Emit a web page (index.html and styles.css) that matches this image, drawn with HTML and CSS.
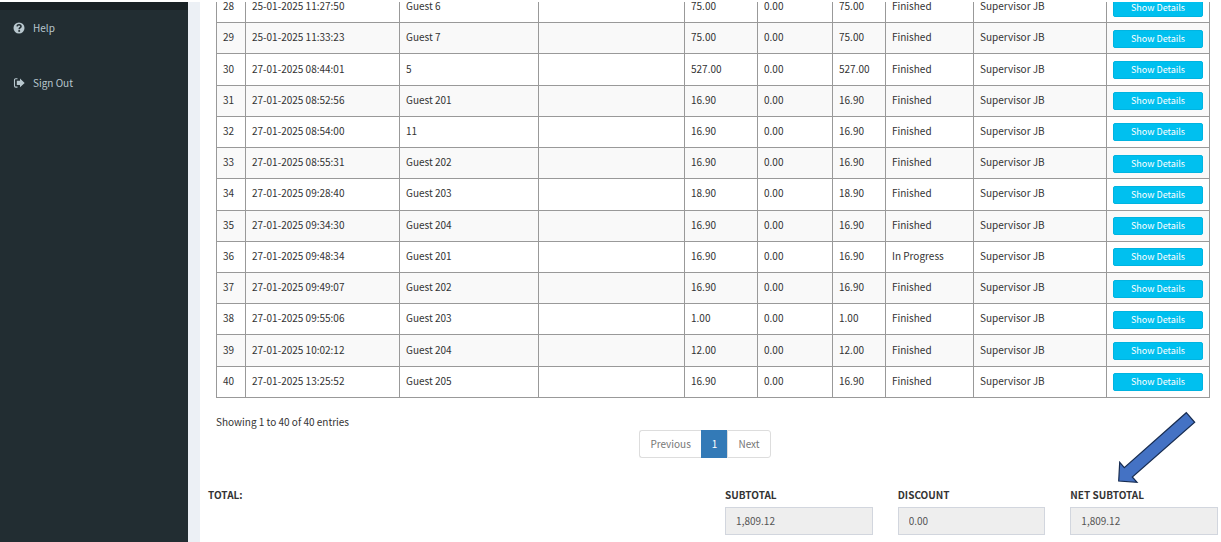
FILE: index.html
```
<!DOCTYPE html>
<html lang="en">
<head>
    <meta charset="UTF-8">
    <meta name="viewport" content="width=device-width, initial-scale=1.0">
    <title>Sales Report</title>
    <link rel="stylesheet" href="styles.css">
</head>
<body>
    <div class="wrapper">
        <aside class="sidebar">
            <div class="sidebar-header"></div>
            <nav class="sidebar-menu">
                <a href="#">
                    <svg class="icon" viewBox="0 0 14 14"><circle cx="7" cy="7" r="5.500" fill="#b8c7ce"/><path d="M5 5.400C5.200 4.300 5.900 3.700 7 3.700c1.200 0 2 .7 2 1.700C9 6.700 7.200 6.700 7.200 8.200" fill="none" stroke="#222d32" stroke-width="1.600"/><path d="M6.300 9.100h1.800v1.700H6.300z" fill="#222d32"/></svg>
                    <span>Help</span>
                </a>
                <a href="#">
                    <svg class="icon" viewBox="0 0 14 14"><path d="M5.500 2.700H3.700C3 2.700 2.500 3.300 2.500 4v5.800c0 .8.500 1.300 1.200 1.300h1.800" fill="none" stroke="#b8c7ce" stroke-width="1.100"/><path d="M8 2.500 12.700 6.900 8 11.300V9H4.800V4.800H8z" fill="#b8c7ce"/></svg>
                    <span>Sign Out</span>
                </a>
            </nav>
        </aside>

        <main class="content">
            <div class="table-box">
                <table class="report">
                    <colgroup>
                        <col class="col-no">
                        <col class="col-date">
                        <col class="col-guest">
                        <col class="col-note">
                        <col class="col-amount">
                        <col class="col-discount">
                        <col class="col-net">
                        <col class="col-status">
                        <col class="col-user">
                        <col class="col-action">
                    </colgroup>
                    <tbody>
                        <tr><td>28</td><td>25-01-2025 11:27:50</td><td>Guest 6</td><td></td><td>75.00</td><td>0.00</td><td>75.00</td><td>Finished</td><td>Supervisor JB</td><td><button type="button" class="btn">Show Details</button></td></tr>
                        <tr><td>29</td><td>25-01-2025 11:33:23</td><td>Guest 7</td><td></td><td>75.00</td><td>0.00</td><td>75.00</td><td>Finished</td><td>Supervisor JB</td><td><button type="button" class="btn">Show Details</button></td></tr>
                        <tr><td>30</td><td>27-01-2025 08:44:01</td><td>5</td><td></td><td>527.00</td><td>0.00</td><td>527.00</td><td>Finished</td><td>Supervisor JB</td><td><button type="button" class="btn">Show Details</button></td></tr>
                        <tr><td>31</td><td>27-01-2025 08:52:56</td><td>Guest 201</td><td></td><td>16.90</td><td>0.00</td><td>16.90</td><td>Finished</td><td>Supervisor JB</td><td><button type="button" class="btn">Show Details</button></td></tr>
                        <tr><td>32</td><td>27-01-2025 08:54:00</td><td>11</td><td></td><td>16.90</td><td>0.00</td><td>16.90</td><td>Finished</td><td>Supervisor JB</td><td><button type="button" class="btn">Show Details</button></td></tr>
                        <tr><td>33</td><td>27-01-2025 08:55:31</td><td>Guest 202</td><td></td><td>16.90</td><td>0.00</td><td>16.90</td><td>Finished</td><td>Supervisor JB</td><td><button type="button" class="btn">Show Details</button></td></tr>
                        <tr><td>34</td><td>27-01-2025 09:28:40</td><td>Guest 203</td><td></td><td>18.90</td><td>0.00</td><td>18.90</td><td>Finished</td><td>Supervisor JB</td><td><button type="button" class="btn">Show Details</button></td></tr>
                        <tr><td>35</td><td>27-01-2025 09:34:30</td><td>Guest 204</td><td></td><td>16.90</td><td>0.00</td><td>16.90</td><td>Finished</td><td>Supervisor JB</td><td><button type="button" class="btn">Show Details</button></td></tr>
                        <tr><td>36</td><td>27-01-2025 09:48:34</td><td>Guest 201</td><td></td><td>16.90</td><td>0.00</td><td>16.90</td><td>In Progress</td><td>Supervisor JB</td><td><button type="button" class="btn">Show Details</button></td></tr>
                        <tr><td>37</td><td>27-01-2025 09:49:07</td><td>Guest 202</td><td></td><td>16.90</td><td>0.00</td><td>16.90</td><td>Finished</td><td>Supervisor JB</td><td><button type="button" class="btn">Show Details</button></td></tr>
                        <tr><td>38</td><td>27-01-2025 09:55:06</td><td>Guest 203</td><td></td><td>1.00</td><td>0.00</td><td>1.00</td><td>Finished</td><td>Supervisor JB</td><td><button type="button" class="btn">Show Details</button></td></tr>
                        <tr><td>39</td><td>27-01-2025 10:02:12</td><td>Guest 204</td><td></td><td>12.00</td><td>0.00</td><td>12.00</td><td>Finished</td><td>Supervisor JB</td><td><button type="button" class="btn">Show Details</button></td></tr>
                        <tr><td>40</td><td>27-01-2025 13:25:52</td><td>Guest 205</td><td></td><td>16.90</td><td>0.00</td><td>16.90</td><td>Finished</td><td>Supervisor JB</td><td><button type="button" class="btn">Show Details</button></td></tr>
                    </tbody>
                </table>
            </div>

            <div class="table-info">Showing 1 to 40 of 40 entries</div>
            <nav class="pagination">
                <a href="#">Previous</a>
                <a href="#" class="active">1</a>
                <a href="#">Next</a>
            </nav>

            <div class="totals">
                <div class="totals-title">TOTAL:</div>
                <div class="field">
                    <label for="subtotal">SUBTOTAL</label>
                    <input type="text" id="subtotal" value="1,809.12" readonly>
                </div>
                <div class="field">
                    <label for="discount">DISCOUNT</label>
                    <input type="text" id="discount" value="0.00" readonly>
                </div>
                <div class="field">
                    <label for="net">NET SUBTOTAL</label>
                    <input type="text" id="net" value="1,809.12" readonly>
                    <svg class="arrow" viewBox="0 0 80 74"><path d="M69.300 1.700 77.700 11.300 15.300 66 20 71.300 1.700 70 2.700 51.300 7.300 56.700z" fill="#4472c4" stroke="#172c51" stroke-width="1.200"/></svg>
                </div>
            </div>
        </main>
    </div>
</body>
</html>
```
FILE: styles.css
```
* {
    box-sizing: border-box;
}
body {
    margin: 0;
    background: #fff;
    color: #333;
    font-family: "Noto Sans CJK SC", "Open Sans", sans-serif;
    font-size: 10px;
    line-height: 16px;
}
.wrapper {
    display: flex;
    min-height: 100vh;
    padding-top: 2px;
}

/* sidebar */
.sidebar {
    flex: 0 0 188px;
    background: #222d32;
}
.sidebar-header {
    height: 8px;
    background: #1a2226;
}
.sidebar-menu {
    display: flex;
    flex-direction: column;
    gap: 20px;
}
.sidebar-menu a {
    display: flex;
    align-items: center;
    gap: 7px;
    height: 35px;
    padding-left: 12px;
    color: #b8c7ce;
    text-decoration: none;
}
.icon {
    width: 14px;
    height: 14px;
}

/* content */
.content {
    flex: 1;
    min-width: 0;
    border-left: 12px solid #ecf0f5;
}
.table-box {
    overflow: hidden;
    padding: 0 11px 0 16px;
}
.report {
    width: 100%;
    height: 407px;
    margin-top: -11px;
    table-layout: fixed;
    border-collapse: collapse;
}
.report td {
    padding: 0 6px 2px;
    border: 1px solid #999;
}
.report td:last-child {
    padding: 1px 6px 0;
}
.report tr:nth-child(even) {
    background: #f9f9f9;
}
.col-no { width: 29px; }
.col-date { width: 154px; }
.col-guest { width: 139px; }
.col-note { width: 146px; }
.col-amount { width: 73px; }
.col-discount { width: 75px; }
.col-net { width: 53px; }
.col-status { width: 88px; }
.col-user { width: 133px; }
.col-action { width: 103px; }
.btn {
    display: block;
    width: 100%;
    height: 18px;
    padding: 0;
    border: 1px solid #00b4e1;
    border-radius: 2px;
    background: #00c0ef;
    color: #fff;
    font-family: inherit;
    font-size: 9px;
    line-height: 16px;
    cursor: pointer;
}

/* paging */
.table-info {
    margin: 16px 16px 0;
}
.pagination {
    display: flex;
    justify-content: center;
    margin: 0 11px 0 0;
}
.pagination a {
    height: 28px;
    padding: 0 10px;
    border: 1px solid #ddd;
    border-right: 0;
    color: #777;
    line-height: 26px;
    text-decoration: none;
}
.pagination a:first-child {
    border-radius: 3px 0 0 3px;
}
.pagination a:last-child {
    border-right: 1px solid #ddd;
    border-radius: 0 3px 3px 0;
}
.pagination .active {
    border-color: #337ab7;
    background: #337ab7;
    color: #fff;
}

/* totals */
.totals {
    display: grid;
    grid-template-columns: 10fr 3fr 3fr 3fr;
    gap: 25px;
    margin-top: 29px;
    padding: 0 3px 7px 8px;
}
.totals-title,
.field label {
    display: block;
    font-weight: bold;
}
.field {
    position: relative;
}
.field input {
    display: block;
    width: 100%;
    height: 28px;
    margin-top: 4px;
    padding: 0 10px 1px;
    border: 1px solid #d2d6de;
    border-radius: 0;
    background: #eee;
    color: #555;
    font-family: inherit;
    font-size: 10px;
}
.arrow {
    position: absolute;
    top: -76px;
    left: 47px;
    width: 80px;
    height: 74px;
}
```
